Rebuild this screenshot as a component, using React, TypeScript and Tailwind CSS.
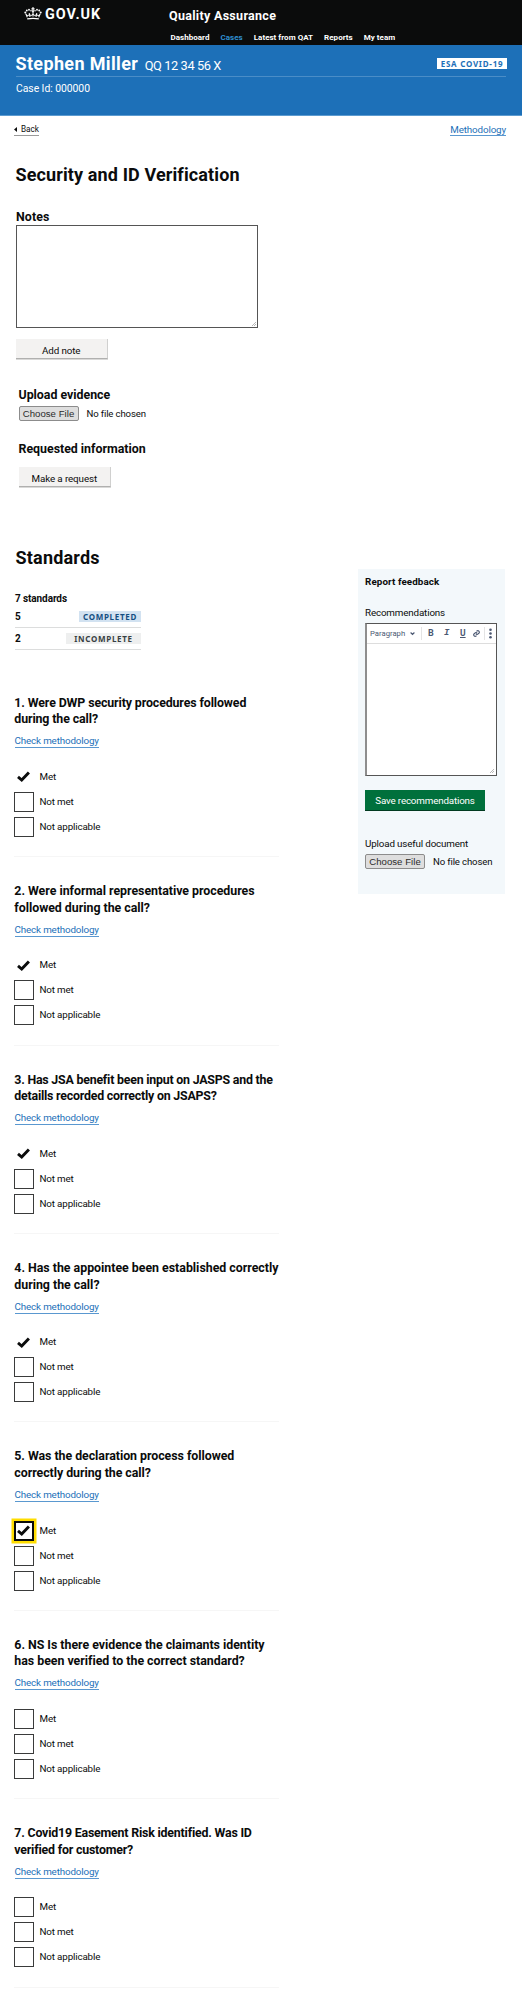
import React from "react";

type Question = { title: string[]; tracking: string; met: boolean; focused?: boolean };

const questions: Question[] = [
  { title: ["1. Were DWP security procedures followed", "during the call?"], tracking: "tracking-[-0.12px]", met: true },
  { title: ["2. Were informal representative procedures", "followed during the call?"], tracking: "tracking-[-0.03px]", met: true },
  { title: ["3. Has JSA benefit been input on JASPS and the", "detaills recorded correctly on JSAPS?"], tracking: "tracking-[-0.22px]", met: true },
  { title: ["4. Has the appointee been established correctly", "during the call?"], tracking: "tracking-[-0.02px]", met: true },
  { title: ["5. Was the declaration process followed", "correctly during the call?"], tracking: "tracking-[-0.05px]", met: true, focused: true },
  { title: ["6. NS Is there evidence the claimants identity", "has been verified to the correct standard?"], tracking: "tracking-[-0.03px]", met: false },
  { title: ["7. Covid19 Easement Risk identified. Was ID", "verified for customer?"], tracking: "tracking-[-0.2px]", met: false },
];

function Crown() {
  return (
    <svg className="h-[13px] w-[18px]" viewBox="0 0 18 13" fill="none" stroke="#fff">
      <path d="M3.2 11.9Q9 10.7 14.8 11.9" strokeWidth="1.3" />
      <path d="M3.3 10.3 1.7 6.6M14.7 10.3l1.6-3.7M9 9.6V5M6 9.8 5.2 6.2M12 9.8l.8-3.6" strokeWidth="1.1" />
      <path d="M2.2 7.8Q4 9.6 5.4 7.6Q7 9.6 9 7.4Q11 9.6 12.6 7.6Q14 9.6 15.8 7.8" strokeWidth="1" />
      <path d="M9 0v4M7.4 1.9h3.2" strokeWidth="1.1" />
      <g fill="#fff" stroke="none">
        <circle cx="1.3" cy="5.4" r="1" />
        <circle cx="2.8" cy="3.5" r=".95" />
        <circle cx="5" cy="2.8" r=".95" />
        <circle cx="7" cy="3.8" r=".8" />
        <circle cx="9" cy="4.3" r="1" />
        <circle cx="11" cy="3.8" r=".8" />
        <circle cx="13" cy="2.8" r=".95" />
        <circle cx="15.2" cy="3.5" r=".95" />
        <circle cx="16.7" cy="5.4" r="1" />
      </g>
    </svg>
  );
}

function Tick() {
  return (
    <svg className="h-[11px] w-[13px]" viewBox="0 0 13 11" fill="none" stroke="#0b0c0c" strokeWidth="2.9">
      <path d="M1 5.9 4.7 9 11.9 1.4" />
    </svg>
  );
}

function Box({ checked, focused }: { checked?: boolean; focused?: boolean }) {
  if (checked && !focused) {
    return (
      <span className="flex h-5 w-5 items-center justify-center">
        <Tick />
      </span>
    );
  }
  if (focused) {
    return (
      <span className="flex h-5 w-5 items-center justify-center border-2 border-[#0b0c0c] bg-white shadow-[0_0_0_2.5px_#ffdd00]">
        <Tick />
      </span>
    );
  }
  return <span className="h-5 w-5 border border-[#3a3b3b] bg-white" />;
}

function FileInput() {
  return (
    <div className="flex h-[15px] items-center">
      <span className="flex h-[15px] w-[60px] items-center justify-center rounded-[2px] border border-[#8c8c8c] bg-[#dedede] font-['Liberation_Sans',sans-serif] text-[9.6px] leading-none tracking-[0.03px] text-[#2b2b2b]">
        Choose File
      </span>
      <span className="ml-2 text-[9.6px] leading-[15px] tracking-[-0.14px] whitespace-nowrap">No file chosen</span>
    </div>
  );
}

function GreyButton({ label }: { label: string }) {
  return (
    <button className="flex h-5 w-[92.5px] items-center justify-center border-r border-b border-r-[#d0d0cf] border-b-[#b0b0af] bg-[#f3f2f1] pt-1 text-[9.8px] leading-none tracking-[-0.1px] shadow-[0_1px_0_#d9d9d8]">
      {label}
    </button>
  );
}

function QuestionBlock({ q }: { q: Question }) {
  return (
    <section className="h-[188.4px] w-[265.5px] border-b border-[#f6f6f6] pt-[26px]">
      <h3 className={`ml-[0.8px] text-[12.4px] leading-[16.5px] font-bold whitespace-nowrap ${q.tracking}`}>
        {q.title.map((line) => (
          <span key={line} className="block">{line}</span>
        ))}
      </h3>
      <a className="mt-[6.5px] ml-px flex h-3.5 w-fit border-b border-[#5a98d0] text-[9.8px] leading-[13px] tracking-[-0.14px] text-[#1d70b8]">Check methodology</a>
      <div className="mt-[18.6px] flex flex-col gap-[5px]">
        {["Met", "Not met", "Not applicable"].map((label, i) => (
          <div key={label} className="flex h-5 items-center">
            <Box checked={i === 0 && q.met} focused={i === 0 && q.focused} />
            <span className="ml-[6px] text-[9.8px] leading-5 tracking-[-0.15px]">{label}</span>
          </div>
        ))}
      </div>
    </section>
  );
}

export default function App() {
  return (
    <div className="h-[2001px] w-[522px] overflow-hidden bg-white font-['Roboto',sans-serif] text-[#0b0c0c]">
      <header className="flex h-[45px] bg-[#0b0c0c] text-white">
        <div className="flex w-[169px] pt-[7px] pl-6">
          <Crown />
          <span className="ml-[3px] pt-px text-[14.4px] leading-[14px] font-bold tracking-[1px]">GOV.UK</span>
        </div>
        <div>
          <div className="mt-2 text-[12.5px] leading-4 font-bold tracking-[0.3px]">Quality Assurance</div>
          <nav className="mt-[8px] ml-[1.5px] flex gap-[11px] text-[8px] leading-3 font-bold tracking-[0.03px] whitespace-nowrap">
            <span>Dashboard</span>
            <span className="text-[#2f8fd0]">Cases</span>
            <span>Latest from QAT</span>
            <span>Reports</span>
            <span>My team</span>
          </nav>
        </div>
      </header>

      <div className="h-[71px] border-b border-[#5c9bd0] bg-[#1d70b8] px-4 text-white">
        <div className="flex h-8 items-baseline border-b border-[#4a8dc7] pt-2">
          <h2 className="ml-[-0.5px] text-[18px] leading-[22px] font-bold tracking-[0.35px]">Stephen Miller</h2>
          <span className="ml-[6.5px] text-[12.8px] leading-4 tracking-[-0.4px]">QQ 12 34 56 X</span>
          <span className="mt-[5px] mr-[-1px] ml-auto flex h-[11px] w-[70px] items-center justify-center self-start bg-white font-['Noto_Sans',sans-serif] text-[8px] leading-none font-bold tracking-[0.75px] text-[#1d70b8]">
            ESA COVID-19
          </span>
        </div>
        <div className="mt-[5px] text-[10.4px] leading-[14px] tracking-[-0.05px]">Case Id: 000000</div>
      </div>

      <div className="flex h-5 items-end justify-between pr-4 pl-3.5">
        <a className="flex h-[13px] items-center border-b border-[#9a9a9a] text-[8.2px] leading-3">
          <svg className="mr-1 h-[5px] w-[3px]" viewBox="0 0 3 5">
            <path d="M3 0v5L0 2.5z" fill="#0b0c0c" />
          </svg>
          Back
        </a>
        <a className="h-[13px] border-b border-[#5a98d0] text-[9.8px] leading-[13px] tracking-[-0.13px] text-[#1d70b8]">Methodology</a>
      </div>

      <main className="flex flex-col pl-4">
        <h1 className="mt-[28px] ml-[-0.5px] text-[18px] leading-[22px] font-bold tracking-[0.12px]">Security and ID Verification</h1>
        <h2 className="mt-[23px] text-[12.4px] leading-4 font-bold tracking-[0.1px]">Notes</h2>
        <div className="flex h-[103px] w-[242px] items-end justify-end border border-[#555] bg-white p-px">
          <svg className="h-1 w-1" viewBox="0 0 4 4" stroke="#888" strokeWidth=".6">
            <path d="M0 4 4 0M2 4l2-2" />
          </svg>
        </div>
        <div className="mt-[11px] ml-[-0.5px]">
          <GreyButton label="Add note" />
        </div>
        <div className="mt-[28px] pl-[2.5px]">
          <h2 className="text-[12.4px] leading-4 font-bold tracking-[-0.02px]">Upload evidence</h2>
          <div className="mt-[3px]">
            <FileInput />
          </div>
          <h2 className="mt-[20px] text-[12.4px] leading-4 font-bold tracking-[-0.02px]">Requested information</h2>
          <div className="mt-[10px]">
            <GreyButton label="Make a request" />
          </div>
        </div>

        <h1 className="mt-[60px] ml-[-0.5px] text-[18px] leading-[22px] font-bold tracking-[0.2px]">Standards</h1>
      </main>

      <div className="flex">
        <div className="w-[358px] pl-[13.5px]">
          <div className="mt-[23px] ml-[1.5px] flex w-[126px] flex-col text-[10px] font-bold">
            <div className="leading-[14px] tracking-[-0.1px]">7 standards</div>
            <div className="flex h-[22px] items-center justify-between border-b border-[#dcdddd]">
              <span className="leading-3">5</span>
              <span className="flex h-[11px] w-[62px] items-center justify-center bg-[#d2e2f1] font-['Noto_Sans',sans-serif] text-[8px] leading-none tracking-[0.7px] text-[#144e81]">COMPLETED</span>
            </div>
            <div className="flex h-[22px] items-center justify-between border-b border-[#dcdddd]">
              <span className="leading-3">2</span>
              <span className="flex h-[11px] w-[75px] items-center justify-center bg-[#eeefef] font-['Noto_Sans',sans-serif] text-[8px] leading-none tracking-[0.7px] text-[#383f43]">INCOMPLETE</span>
            </div>
          </div>
          <div className="mt-[18.9px]">
            {questions.map((q) => (
              <QuestionBlock key={q.title[0]} q={q} />
            ))}
          </div>
        </div>

        <aside className="h-[325px] w-[147px] bg-[#f3f8fb] pt-1.5 pl-[7px]">
          <h3 className="text-[9.8px] leading-[14px] font-bold tracking-[0.1px]">Report feedback</h3>
          <div className="mt-[17px] text-[9.8px] leading-[14px] tracking-[-0.15px]">Recommendations</div>
          <div className="mt-[3px] flex h-[153px] w-[132px] flex-col border border-l-2 border-[#555] border-l-[#8e8e8e] bg-white">
            <div className="flex h-5 items-center border-b border-[#dddddd] pl-[3px] text-[#4b5872]">
              <span className="w-[35px] text-[7.7px] leading-none">Paragraph</span>
              <svg className="ml-[5px] h-[5px] w-[5px]" viewBox="0 0 5 5" fill="none" stroke="currentColor" strokeWidth="1.2">
                <path d="M.6 1.5 2.5 3.4 4.4 1.5" />
              </svg>
              <span className="ml-[6px] h-[13px] w-px bg-[#e4e4e4]" />
              <span className="ml-[6px] w-[16px] text-[9px] leading-none font-bold">B</span>
              <span className="w-[16px] font-['Liberation_Mono',monospace] text-[9px] leading-none font-bold italic">I</span>
              <span className="w-[13px] text-[8.5px] leading-none font-bold underline">U</span>
              <svg className="h-[7px] w-[7px]" viewBox="0 0 24 24" fill="none" stroke="currentColor" strokeWidth="4">
                <path d="M10 13a5 5 0 0 0 7.5.5l3-3a5 5 0 0 0-7-7L12 5M14 11a5 5 0 0 0-7.5-.5l-3 3a5 5 0 0 0 7 7L12 19" />
              </svg>
              <span className="ml-[4px] h-[13px] w-px bg-[#e4e4e4]" />
              <svg className="ml-[4px] h-[11px] w-[3px]" viewBox="0 0 3 11" fill="currentColor">
                <circle cx="1.5" cy="1.7" r="1.3" />
                <circle cx="1.5" cy="5.5" r="1.3" />
                <circle cx="1.5" cy="9.3" r="1.3" />
              </svg>
            </div>
            <div className="flex flex-1 items-end justify-end p-0.5">
              <svg className="h-1 w-1" viewBox="0 0 4 4" stroke="#888" strokeWidth=".6">
                <path d="M0 4 4 0M2 4l2-2" />
              </svg>
            </div>
          </div>
          <button className="mt-[14px] flex h-[21px] w-[120px] items-center justify-center border-b border-[#003a20] bg-[#00703c] pt-px text-[9.8px] leading-none tracking-[-0.17px] text-white">
            Save recommendations
          </button>
          <div className="mt-[26px] text-[9.8px] leading-[14px] tracking-[-0.15px]">Upload useful document</div>
          <div className="mt-[3px]">
            <FileInput />
          </div>
        </aside>
      </div>
    </div>
  );
}
